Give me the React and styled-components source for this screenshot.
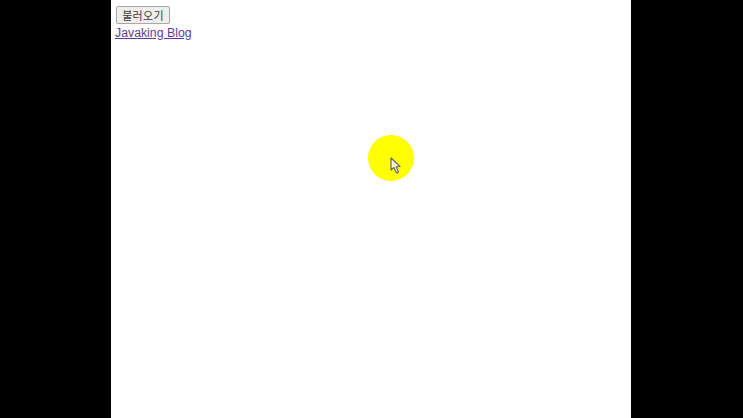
import styled, { createGlobalStyle } from "styled-components";

const GlobalStyle = createGlobalStyle`
  html, body {
    margin: 0;
    height: 100%;
    background: #000;
    overflow: hidden;
  }
  #root {
    height: 100%;
  }
`;

const Letterbox = styled.div`
  display: flex;
  justify-content: center;
  height: 418px;
  padding-right: 3px;
  box-sizing: border-box;
  background: #000;
`;

const Page = styled.main`
  position: relative;
  width: 520px;
  height: 418px;
  margin-left: 1px;
  padding: 6px 0 0 4.5px;
  box-sizing: border-box;
  background: #fff;
  font-family: "Liberation Sans", Arial, sans-serif;
`;

const LoadButton = styled.button`
  display: block;
  width: 54px;
  height: 18px;
  margin: 0 0 0 1px;
  padding: 0;
  border: 1px solid #a8a8a8;
  border-radius: 2px;
  background: #eeeeee;
  color: #3a3a3a;
  font-family: "Noto Sans CJK KR", "Liberation Sans", sans-serif;
  font-size: 11px;
  line-height: 16px;
  letter-spacing: 0.3px;
`;

const BlogLink = styled.a`
  display: block;
  width: max-content;
  margin-top: 1px;
  color: #5f3a94;
  font-size: 12.3px;
  line-height: 16px;
  text-decoration: underline;
`;

const CursorHighlight = styled.div`
  position: absolute;
  left: 257px;
  top: 135px;
  width: 46px;
  height: 46px;
  border-radius: 50%;
  background: #ffff00;
`;

const CursorIcon = styled.svg`
  position: absolute;
  left: 22.5px;
  top: 22px;
  width: 12px;
  height: 18px;
`;

export default function App() {
  return (
    <>
      <GlobalStyle />
      <Letterbox>
        <Page>
          <LoadButton type="button">불러오기</LoadButton>
          <BlogLink href="#">Javaking Blog</BlogLink>
          <CursorHighlight>
            <CursorIcon viewBox="0 0 12 18">
              <path
                d="M1 1 L1 13 L4 10.5 L6.5 16 L8.5 15 L6.2 9.8 L10 9.5 Z"
                fill="#f4f4ee"
                stroke="#666"
                strokeWidth="1.2"
                strokeLinejoin="round"
              />
            </CursorIcon>
          </CursorHighlight>
        </Page>
      </Letterbox>
    </>
  );
}
